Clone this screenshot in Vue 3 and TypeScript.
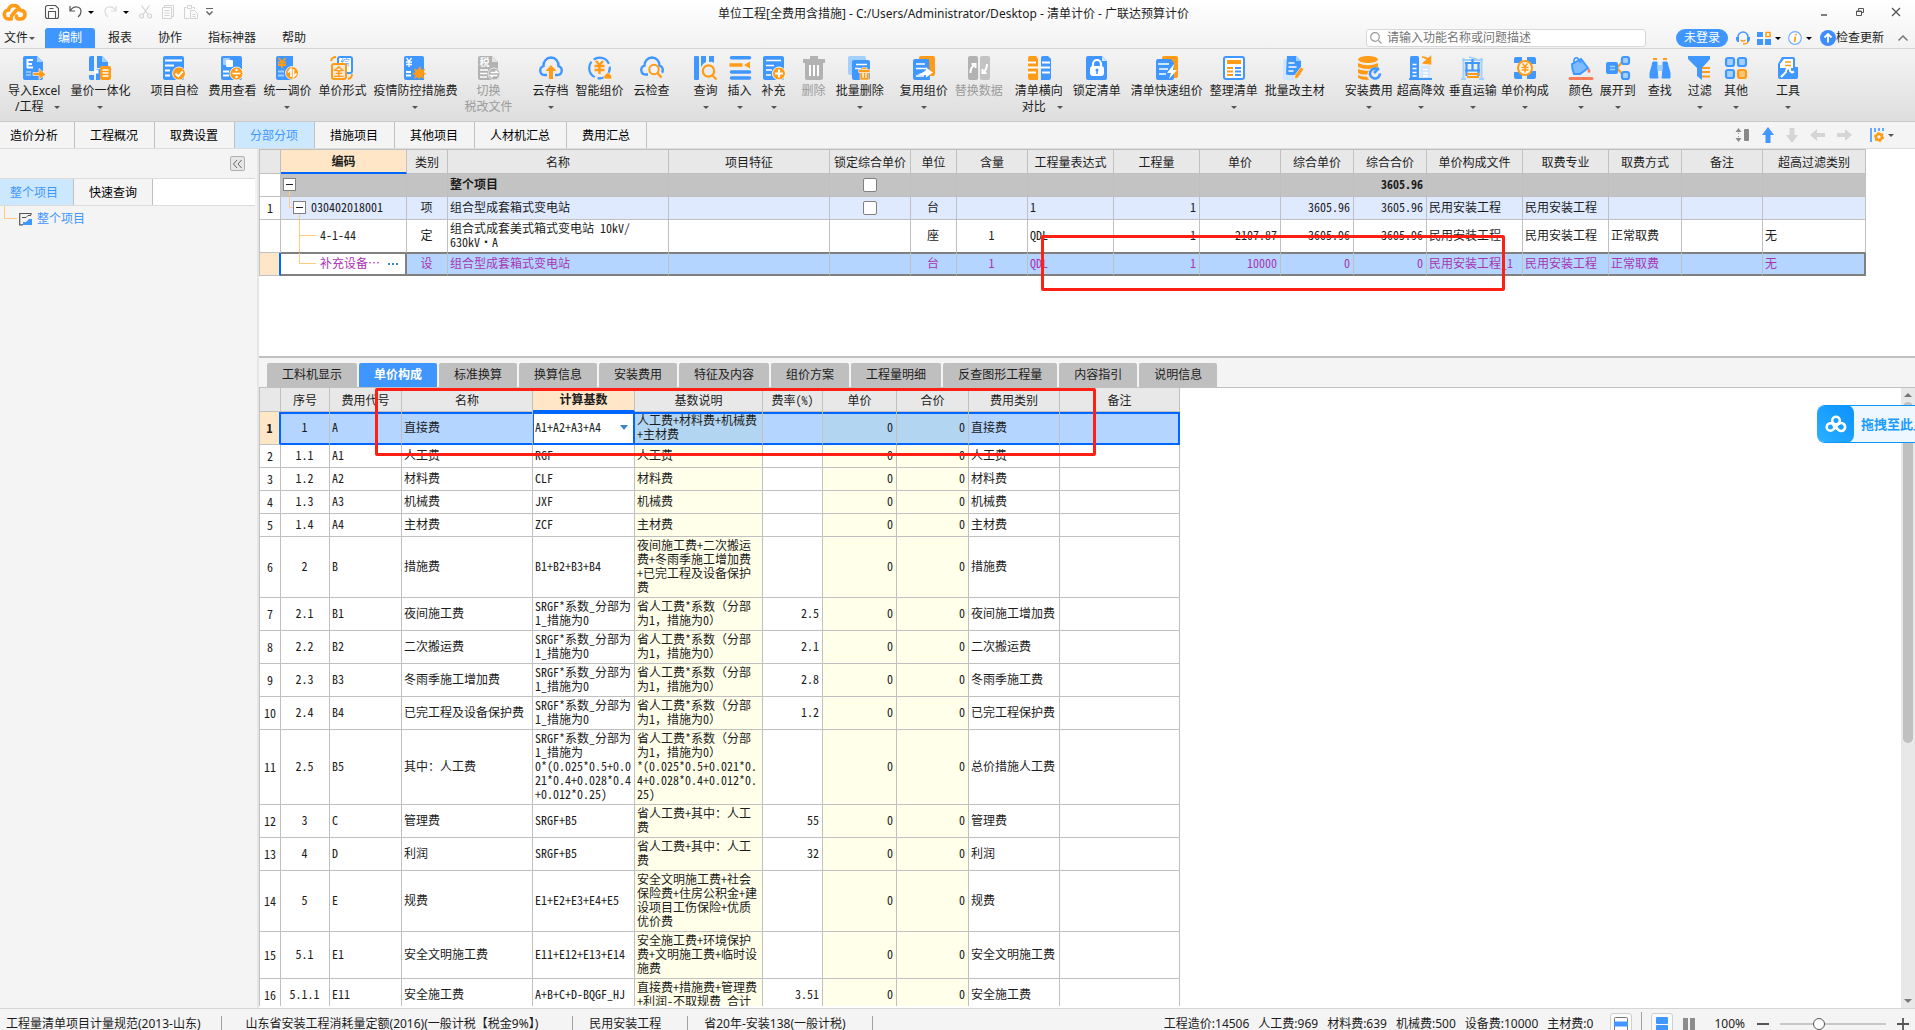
<script setup lang="ts">
import { ref } from 'vue'

const B = '#3f97ff'
const O = '#ff9b16'
const L = '#a3d0ff'
const G = '#b2b2b2'

const doc = (fill: string) => `<path d="M3 0h12l6 6v16a2 2 0 0 1-2 2H3a2 2 0 0 1-2-2V2a2 2 0 0 1 2-2z" fill="${fill}"/>`
const fold = `<path d="M15 0l6 6h-6z" fill="${L}"/>`

const icons: Record<string, string> = {
  excel: `${doc(B)}${fold}<path d="M5 4h6M5 8h5M5 11.500h6M5.500 3v9" stroke="#fff" stroke-width="2" fill="none"/><path d="M4 16h5M4 19h5" stroke="${L}" stroke-width="1.500"/><path d="M11 16.500h6v-4l7 6-7 5v-4h-6z" fill="${O}" stroke="#fff" stroke-width=".6"/>`,
  integrate: `<path d="M1 2a2 2 0 0 1 2-2h3v15H1zM9 0h5l6 6v6H9z" fill="${B}"/><path d="M14 0l6 6h-6z" fill="${L}"/><path d="M1 19h5v5H3a2 2 0 0 1-2-2zM8 13h4v11H8zM1 13h5v2H1z" fill="${B}"/><path d="M6 13.500h4.500v4H6z" fill="#fff"/><rect x="12" y="10" width="11" height="14" rx="2" fill="${O}"/><path d="M14.500 14h6M14.500 17h6M14.500 20h6" stroke="#fff" stroke-width="1.500"/>`,
  check: `<rect x="1" y="0" width="21" height="24" rx="2" fill="${B}"/><path d="M3 4.500h17M3 9.500h9M3 14.500h5M3 19.500h5" stroke="#fff" stroke-width="2"/><circle cx="17" cy="17.500" r="6.500" fill="${O}" stroke="#fff" stroke-width=".8"/><path d="M13.500 17.500l2.800 2.800 4.500-5" stroke="#fff" stroke-width="2" fill="none"/>`,
  fee: `<rect x="1" y="0" width="21" height="24" rx="2" fill="${B}"/><rect x="3" y="2" width="7" height="7" rx="1" fill="${L}"/><rect x="6" y="4" width="7" height="7" rx="1" fill="#fff"/><path d="M3 15.500h6M3 19.500h6" stroke="#fff" stroke-width="2"/><circle cx="16.500" cy="17.500" r="6.500" fill="${O}" stroke="#fff" stroke-width=".8"/><path d="M12.500 17.500h8" stroke="#fff" stroke-width="1.600"/><circle cx="16.500" cy="14" r="1.200" fill="#fff"/><circle cx="16.500" cy="21" r="1.200" fill="#fff"/>`,
  adjust: `<path d="M3 0h15v24H3a2 2 0 0 1-2-2V2a2 2 0 0 1 2-2z" fill="${B}"/><path d="M3.500 2l3.500 4 3.500-4M3 6.500h8M3 9h8M7 6v6" stroke="${O}" stroke-width="1.800" fill="none"/><path d="M3 15.500h6M3 19.500h6" stroke="${L}" stroke-width="2"/><circle cx="17" cy="17" r="6.500" fill="${O}" stroke="#fff" stroke-width=".8"/><path d="M16 21v-8l-3 3.500M18.500 13v8l3-3.500" stroke="#fff" stroke-width="1.700" fill="none"/>`,
  form: `<rect x="8" y="1" width="14" height="16" rx="2" fill="#fff" stroke="${B}" stroke-width="2"/><text x="15" y="10" font-size="9" text-anchor="middle" fill="${B}" font-family="Noto Sans CJK SC, sans-serif">综</text><rect x="2" y="8" width="14" height="15" rx="2" fill="#f4ead9" stroke="${O}" stroke-width="2"/><text x="9" y="20" font-size="11" font-weight="700" text-anchor="middle" fill="${O}" font-family="Noto Sans CJK SC, sans-serif">全</text><path d="M1 5q1-4 5-4M22 18q0 4-4 5" stroke="${O}" stroke-width="2" fill="none"/>`,
  epidemic: `<path d="M3 0h16a2 2 0 0 1 2 2v22H3a2 2 0 0 1-2-2V2a2 2 0 0 1 2-2z" fill="${B}"/><path d="M3.500 2l2.500 3.500 2.500-3.500M3 6h6M3 8.500h6M6 5v6" stroke="#fff" stroke-width="1.300" fill="none"/><path d="M3 16h5M3 19.500h5" stroke="#fff" stroke-width="2"/><path d="M17 10l1.500 4 4-1.500-2 3.500 3 2-3.500 1 1.500 4-4-2-1.500 3-1-3-4 2 1.500-4-3.500-1 3.500-2-2-3.500 4 1.500z" fill="${O}"/>`,
  tax: `${doc(G)}<path d="M15 0l6 6h-6z" fill="#e4e4e4"/><text x="7.500" y="10" font-size="10" font-weight="700" text-anchor="middle" fill="#fff" font-family="Noto Sans CJK SC, sans-serif">税</text><path d="M3 14h8M3 17.500h7M3 21h7" stroke="#fff" stroke-width="1.500"/><circle cx="17" cy="18" r="6" fill="${G}" stroke="#eee" stroke-width="1"/><path d="M13.500 16.500h7l-2-2M20.500 19.500h-7l2 2" stroke="#fff" stroke-width="1.500" fill="none"/>`,
  cloudup: `<path d="M8 19H5.500a4.500 4.500 0 0 1-1-8.800A7.800 7.800 0 0 1 12 1.500a7.800 7.800 0 0 1 7.500 8.700 4.500 4.500 0 0 1-1 8.800H16" fill="none" stroke="${B}" stroke-width="2.400"/><path d="M12 9l5.500 6H14v8h-4v-8H6.500z" fill="${O}"/>`,
  smart: `<circle cx="11.500" cy="12" r="10.300" fill="none" stroke="${B}" stroke-width="2.200" stroke-dasharray="18 3"/><path d="M8 5l3.500 4L15 5M6.500 10h10M6.500 14h10M11.500 9v9" stroke="${O}" stroke-width="2.400" fill="none"/><path d="M16 23q-1-3 1-4 2-4 5-1 2 1 2 5z" fill="${O}" stroke="#fff" stroke-width=".6"/>`,
  cloudfind: `<path d="M8 18.500H5.500a4.500 4.500 0 0 1-1-8.800A7.800 7.800 0 0 1 12 1.500a7.800 7.800 0 0 1 7.500 8.200 4.500 4.500 0 0 1 2.500 7" fill="none" stroke="${B}" stroke-width="2.400"/><circle cx="14" cy="13.500" r="4.700" fill="#f4f4f4" stroke="${O}" stroke-width="2"/><path d="M17.500 17l4 4.500" stroke="${O}" stroke-width="2.400"/>`,
  query: `<rect x="0" y="0" width="5" height="24" rx="1" fill="${B}"/><path d="M7 0h5v6q-3 1-5 5zM15 0h5v7q-2-2-5-1z" fill="${B}"/><circle cx="14.500" cy="15" r="5.700" fill="none" stroke="${O}" stroke-width="2.200"/><path d="M18.500 19.500l4 4" stroke="${O}" stroke-width="2.200"/>`,
  insert: `<path d="M3.500 1.800h18M3.500 16h18M3.500 22h18" stroke="${B}" stroke-width="3.500" stroke-linecap="round"/><path d="M1.500 9h13" stroke="${O}" stroke-width="3.500"/><path d="M16 9l6-3.500v7z" fill="${O}"/>`,
  add: `<rect x="1" y="0" width="21" height="24" rx="2" fill="${B}"/><path d="M4 4.500h15M4 9.500h8M4 14h6M4 19h5" stroke="#fff" stroke-width="1.600"/><circle cx="17" cy="17.500" r="6.500" fill="${O}" stroke="#fff" stroke-width="1"/><path d="M17 13.500v8M13 17.500h8" stroke="#fff" stroke-width="2.200"/>`,
  del: `<path d="M1 3h7V0h8v3h7v4H1zM3 7h18v15a2 2 0 0 1-2 2H5a2 2 0 0 1-2-2z" fill="${G}"/><path d="M8 9v11M12 9v11M16 9v11" stroke="#fff" stroke-width="2"/>`,
  batchdel: `<rect x="0" y="0" width="18" height="19" rx="2" fill="${L}"/><rect x="4" y="4" width="18" height="20" rx="2" fill="${B}"/><path d="M8 8.500h11M7 12.500h6" stroke="#fff" stroke-width="1.600"/><path d="M10.500 13.500h11.500v3H10.500zM12 16.500h9V24h-9zM14 11.500h5v2h-5z" fill="${O}" stroke="#fff" stroke-width=".5"/><path d="M15 17v5M18 17v5" stroke="#fff" stroke-width="1.300"/>`,
  reuse: `<rect x="7" y="0" width="16" height="20" rx="2" fill="${O}"/><path d="M3 3h14l1 21H3a2 2 0 0 1-2-2V5a2 2 0 0 1 2-2z" fill="${B}"/><path d="M4 8h9M4 12.500h11M4 20h8" stroke="#fff" stroke-width="1.600"/><path d="M5 18q5 0 9-4v-2.500l7 5-7 5V19q-4 1-9-1z" fill="#fff"/>`,
  replace: `<rect x="1" y="0" width="10" height="24" rx="2" fill="${G}"/><rect x="13" y="0" width="10" height="24" rx="2" fill="#c3c3c3"/><path d="M3.500 17q0-6 4-8M4.500 8h4v4M20 8q0 5-3 8M15.500 13v4h4" stroke="#fff" stroke-width="2" fill="none"/>`,
  compare: `<path d="M3 0h6l2 3v21H3a2 2 0 0 1-2-2V2a2 2 0 0 1 2-2z" fill="${O}"/><path d="M14 2a2 2 0 0 1 2-2h5l3 3v19a2 2 0 0 1-2 2h-8z" fill="${B}"/><path d="M1 6.500h8M1 11.500h10M1 16.500h8M15 6.500h8M14 11.500h9M15 16.500h8" stroke="#fff" stroke-width="1.800"/>`,
  lock: `<path d="M3 0h14l5 5v17a2 2 0 0 1-2 2H3a2 2 0 0 1-2-2V2a2 2 0 0 1 2-2z" fill="${B}"/><path d="M17 0l5 5h-5z" fill="#cfe6ff"/><rect x="5" y="10" width="14" height="10" rx="3" fill="#fff"/><path d="M8 11V8a4 4 0 0 1 8 0v3" fill="none" stroke="#fff" stroke-width="2.200"/><circle cx="12" cy="14" r="1.500" fill="${B}"/><path d="M12 14v4" stroke="${B}" stroke-width="1.500"/>`,
  fast: `<rect x="7" y="0" width="16" height="22" rx="2" fill="${O}"/><path d="M3 3h13l3 4v15a2 2 0 0 1-2 2H3a2 2 0 0 1-2-2V5a2 2 0 0 1 2-2z" fill="${B}"/><path d="M3 8h11M4 13h9M4 18h7" stroke="#fff" stroke-width="1.700"/><path d="M19 8l-7 9h4l-2 6 8-9h-4z" fill="#fff"/>`,
  arrange: `<rect x="2" y="1" width="20" height="22" rx="2" fill="#fff" stroke="${B}" stroke-width="2"/><path d="M5 6h14" stroke="${O}" stroke-width="4"/><path d="M5 12h6M5 15.500h6M5 19h6" stroke="${O}" stroke-width="1.800"/><path d="M13 12h6M13 15.500h6M13 19h6" stroke="${B}" stroke-width="1.800"/>`,
  material: `<rect x="0" y="3" width="15" height="21" rx="2" fill="#cfe7ff"/><path d="M4 0h9l5 5v14H5a2 2 0 0 1-2-2z" fill="${B}"/><path d="M13 0l5 5h-5z" fill="${L}"/><path d="M5.500 7h6M5.500 11h8M5.500 15h5" stroke="#fff" stroke-width="1.600"/><path d="M18 11l3 2-6 9-3.500 1 .5-4z" fill="${O}" stroke="#fff" stroke-width=".6"/>`,
  install: `<ellipse cx="11" cy="3.500" rx="10" ry="3.500" fill="${O}"/><path d="M1 7q10 4.500 20 0v4q-10 4-20 0zM1 13q6 2.500 11 1.500l-2 4q-6 0-9-1.500zM1 19q4 2 9 1.700l2 3.300Q3 24 1 21.500z" fill="${O}"/><path d="M21 13.500a5 5 0 1 0 2 4M17 17l5-5" stroke="${B}" stroke-width="2.600" fill="none"/>`,
  high: `<rect x="1" y="0" width="9" height="23" rx="1.500" fill="${B}"/><path d="M3.500 8.500h4M3.500 12.500h4M3.500 16.500h4M3.500 20h4" stroke="#fff" stroke-width="1.500"/><rect x="12" y="10" width="9" height="13" fill="#d0e7ff"/><path d="M14 13.500h5M14 17h5M14 20h5" stroke="#fff" stroke-width="1.500"/><path d="M0 23h23" stroke="${B}" stroke-width="2"/><path d="M13 1q5 0 7 4M21.500 1v7l-7-1z" stroke="${O}" stroke-width="1.500" fill="${O}"/>`,
  vertical: `<path d="M2.500 2v21M20.500 2v21M0 23h5M18 23h5M1 4h21" stroke="${L}" stroke-width="2" fill="none"/><path d="M8 1l8 2" stroke="${L}" stroke-width="1.500"/><path d="M5.500 7v13M17.500 7v13M11.500 3v12M4 7h15M4 14.500h15" stroke="${B}" stroke-width="2.200" fill="none"/><path d="M6 18h12M6 21h12" stroke="${O}" stroke-width="2"/>`,
  compose: `<path d="M3 1h6v6H1V3a2 2 0 0 1 2-2zM14 1h7a2 2 0 0 1 2 2v5h-9zM1 16h8v7H3a2 2 0 0 1-2-2zM14 15h9v6a2 2 0 0 1-2 2h-7z" fill="${B}"/><circle cx="12" cy="12" r="7" fill="#fff8ec" stroke="${O}" stroke-width="2"/><path d="M9.500 7.500l2.500 3 2.500-3M8.500 11.500h7M8.500 14h7M12 11v5.500" stroke="${O}" stroke-width="1.500" fill="none"/>`,
  color: `<path d="M3 8l9-5 7 9-8 6H5q-2-5-2-10z" fill="#7dbbff" stroke="${B}" stroke-width="2"/><path d="M5 8V4q1-3 3.500-2L12 7" stroke="${B}" stroke-width="1.600" fill="none"/><path d="M20 12q3 4 0 5-3-1 0-5z" fill="#fa7d5a"/><path d="M1 22.500h22" stroke="#fa7d5a" stroke-width="3" stroke-linecap="round"/>`,
  expand: `<path d="M11 12l6-7M11 12l6 7" stroke="${O}" stroke-width="2"/><rect x="0" y="6" width="12" height="12" rx="2" fill="${B}"/><path d="M4 10.500h5M4 13.500h5" stroke="${L}" stroke-width="1.600"/><rect x="16" y="1" width="7" height="7" rx="2" fill="${L}" stroke="${B}" stroke-width="2.200"/><rect x="16" y="16" width="7" height="7" rx="2" fill="${L}" stroke="${B}" stroke-width="2.200"/>`,
  find: `<path d="M5 6h4v7l1 9H2V17zM19 6h-4v7l-1 9h8v-5z" fill="${B}" stroke="${B}" stroke-width="1"/><path d="M10 9h4v6h-4z" fill="${L}"/><path d="M5 3h4M15 3h4" stroke="${O}" stroke-width="2.200"/>`,
  filter: `<path d="M0 0h22v3l-8 9v12l-5-4v-8L0 3z" fill="${B}"/><path d="M14 12h8M14 16h8M14 20.500h8" stroke="${O}" stroke-width="2.200"/>`,
  other: `<g fill="${L}" stroke="${B}" stroke-width="2.200"><rect x="2" y="2" width="8" height="8" rx="2"/><rect x="14" y="2" width="8" height="8" rx="2"/><rect x="2" y="14" width="8" height="8" rx="2"/></g><rect x="14" y="14" width="8" height="8" rx="2" fill="#ffc473" stroke="${O}" stroke-width="2.200"/>`,
  tool: `<path d="M6 1h11a2 2 0 0 1 2 2v8h3v10a2 2 0 0 1-2 2H4a2 2 0 0 1-2-2V8z" fill="${B}"/><path d="M8 3h9v9H4V8z" fill="#fff"/><path d="M9 6h6M9 9.500h6" stroke="${O}" stroke-width="1.700"/><path d="M5 21l5-5a3.500 3.500 0 0 1 4-4v3l2 1.500 2-1" stroke="#fff" stroke-width="2" fill="none"/>`,
}

interface Tool {
  icon: string
  text: string
  gap: number
  second?: string
  arrow?: boolean
  off?: boolean
}
const tools: Tool[] = [
  { icon: 'excel', text: '导入Excel', second: '/工程', arrow: true, gap: 0 },
  { icon: 'integrate', text: '量价一体化', arrow: true, gap: 10 },
  { icon: 'check', text: '项目自检', gap: 20 },
  { icon: 'fee', text: '费用查看', gap: 10 },
  { icon: 'adjust', text: '统一调价', arrow: true, gap: 7 },
  { icon: 'form', text: '单价形式', gap: 7 },
  { icon: 'epidemic', text: '疫情防控措施费', arrow: true, gap: 7 },
  { icon: 'tax', text: '切换', second: '税改文件', off: true, gap: 7 },
  { icon: 'cloudup', text: '云存档', arrow: true, gap: 20 },
  { icon: 'smart', text: '智能组价', gap: 7 },
  { icon: 'cloudfind', text: '云检查', gap: 10 },
  { icon: 'query', text: '查询', arrow: true, gap: 24 },
  { icon: 'insert', text: '插入', arrow: true, gap: 10 },
  { icon: 'add', text: '补充', arrow: true, gap: 10 },
  { icon: 'del', text: '删除', off: true, gap: 16 },
  { icon: 'batchdel', text: '批量删除', arrow: true, gap: 10 },
  { icon: 'reuse', text: '复用组价', arrow: true, gap: 16 },
  { icon: 'replace', text: '替换数据', off: true, gap: 7 },
  { icon: 'compare', text: '清单横向', second: '对比', arrow: true, gap: 12 },
  { icon: 'lock', text: '锁定清单', gap: 10 },
  { icon: 'fast', text: '清单快速组价', gap: 10 },
  { icon: 'arrange', text: '整理清单', arrow: true, gap: 7 },
  { icon: 'material', text: '批量改主材', gap: 7 },
  { icon: 'install', text: '安装费用', arrow: true, gap: 20 },
  { icon: 'high', text: '超高降效', arrow: true, gap: 4 },
  { icon: 'vertical', text: '垂直运输', arrow: true, gap: 4 },
  { icon: 'compose', text: '单价构成', arrow: true, gap: 4 },
  { icon: 'color', text: '颜色', arrow: true, gap: 20 },
  { icon: 'expand', text: '展开到', arrow: true, gap: 7 },
  { icon: 'find', text: '查找', gap: 12 },
  { icon: 'filter', text: '过滤', arrow: true, gap: 16 },
  { icon: 'other', text: '其他', arrow: true, gap: 12 },
  { icon: 'tool', text: '工具', arrow: true, gap: 28 },
]

const menus = ['编制', '报表', '协作', '指标神器', '帮助']
const pages = ['造价分析', '工程概况', '取费设置', '分部分项', '措施项目', '其他项目', '人材机汇总', '费用汇总']

const listCols: [string, number][] = [
  ['', 21], ['编码', 126], ['类别', 41], ['名称', 221], ['项目特征', 161], ['锁定综合单价', 81], ['单位', 46],
  ['含量', 71], ['工程量表达式', 86], ['工程量', 86], ['单价', 81], ['综合单价', 73], ['综合合价', 73],
  ['单价构成文件', 96], ['取费专业', 86], ['取费方式', 73], ['备注', 81], ['超高过滤类别', 103],
]
const listAlign = ['c', '', 'c', 'l', 'l', 'c', 'c', 'c', 'l', 'r', 'r', 'r', 'r', 'l', 'l', 'l', 'l', 'l']
const listRows = [
  { kind: 'root', code: '', cells: ['', '整个项目', '', '#', '', '', '', '', '', '', '3605.96', '', '', '', '', ''] },
  { kind: 'item', code: '030402018001', cells: ['项', '组合型成套箱式变电站', '', '#', '台', '', '1', '1', '', '3605.96', '3605.96', '民用安装工程', '民用安装工程', '', '', ''] },
  { kind: 'quota', code: '4-1-44', cells: ['定', '组合式成套美式箱式变电站 10kV/\n630kV·A', '', '', '座', '1', 'QDL', '1', '2107.87', '3605.96', '3605.96', '民用安装工程', '民用安装工程', '正常取费', '', '无'] },
  { kind: 'picked', code: '补充设备⋯', cells: ['设', '组合型成套箱式变电站', '', '', '台', '1', 'QDL', '1', '10000', '0', '0', '民用安装工程_1', '民用安装工程', '正常取费', '', '无'] },
]

const details = ['工料机显示', '单价构成', '标准换算', '换算信息', '安装费用', '特征及内容', '组价方案', '工程量明细', '反查图形工程量', '内容指引', '说明信息']
const feeCols: [string, number][] = [
  ['', 21], ['序号', 49], ['费用代号', 72], ['名称', 131], ['计算基数', 102], ['基数说明', 128],
  ['费率(%)', 60], ['单价', 74], ['合价', 72], ['费用类别', 91], ['备注', 120],
]
const factor = 'SRGF*系数_分部为\n1_措施为0'
const factorNote = '省人工费*系数（分部\n为1，措施为0）'
const feeRows: string[][] = [
  ['1', 'A', '直接费', 'A1+A2+A3+A4', '人工费+材料费+机械费\n+主材费', '', '直接费'],
  ['1.1', 'A1', '人工费', 'RGF', '人工费', '', '人工费'],
  ['1.2', 'A2', '材料费', 'CLF', '材料费', '', '材料费'],
  ['1.3', 'A3', '机械费', 'JXF', '机械费', '', '机械费'],
  ['1.4', 'A4', '主材费', 'ZCF', '主材费', '', '主材费'],
  ['2', 'B', '措施费', 'B1+B2+B3+B4', '夜间施工费+二次搬运\n费+冬雨季施工增加费\n+已完工程及设备保护\n费', '', '措施费'],
  ['2.1', 'B1', '夜间施工费', factor, factorNote, '2.5', '夜间施工增加费'],
  ['2.2', 'B2', '二次搬运费', factor, factorNote, '2.1', '二次搬运费'],
  ['2.3', 'B3', '冬雨季施工增加费', factor, factorNote, '2.8', '冬雨季施工费'],
  ['2.4', 'B4', '已完工程及设备保护费', factor, factorNote, '1.2', '已完工程保护费'],
  ['2.5', 'B5', '其中：人工费', 'SRGF*系数_分部为\n1_措施为\n0*(0.025*0.5+0.0\n21*0.4+0.028*0.4\n+0.012*0.25)', '省人工费*系数（分部\n为1，措施为0）\n*(0.025*0.5+0.021*0.\n4+0.028*0.4+0.012*0.\n25)', '', '总价措施人工费'],
  ['3', 'C', '管理费', 'SRGF+B5', '省人工费+其中：人工\n费', '55', '管理费'],
  ['4', 'D', '利润', 'SRGF+B5', '省人工费+其中：人工\n费', '32', '利润'],
  ['5', 'E', '规费', 'E1+E2+E3+E4+E5', '安全文明施工费+社会\n保险费+住房公积金+建\n设项目工伤保险+优质\n优价费', '', '规费'],
  ['5.1', 'E1', '安全文明施工费', 'E11+E12+E13+E14', '安全施工费+环境保护\n费+文明施工费+临时设\n施费', '', '安全文明施工费'],
  ['5.1.1', 'E11', '安全施工费', 'A+B+C+D-BQGF_HJ', '直接费+措施费+管理费\n+利润-不取规费_合计', '3.51', '安全施工费'],
]
// Chinese punctuation keeps its full width, while Latin text is set half-width
const pieces = (s: string) => s.split(/([（），：])/).filter((p) => p !== '')
const isMark = (p: string) => /^[（），：]$/.test(p)

const totals = ['工程造价:14506', '人工费:969', '材料费:639', '机械费:500', '设备费:10000', '主材费:0']
const basis = ref('A1+A2+A3+A4')
const zoom = ref(35)
</script>

<template>
  <div class="app">
    <header class="top">
      <div class="title-row">
        <div class="quick">
          <svg class="logo" width="24" height="18" viewBox="0 0 24 18"><path d="M9 15.500H6.500a4.500 4.500 0 0 1-.5-9Q7 2 11.500 2q4 0 5.500 4M9 12.500l4.500-5.500q2.500-2 5 0 4 0 4 4t-4 4.500h-2.500q-2.500-.5-2-3" transform="translate(-.5 .5)" fill="none" stroke="#ff9b16" stroke-width="3.600" stroke-linecap="round" /></svg>
          <button aria-label="保存" class="save"><svg width="14" height="14" viewBox="0 0 14 14" fill="none" stroke="#555" stroke-width="1.100"><path d="M.5 2.500a2 2 0 0 1 2-2h8l3 3v8a2 2 0 0 1-2 2h-9a2 2 0 0 1-2-2zM3.500 13.500v-7h7v7M4.500 3.500h4" /></svg></button>
          <button aria-label="撤销" class="undo"><svg width="13" height="14" viewBox="0 0 13 14" fill="none" stroke="#555" stroke-width="1.200"><path d="M1 1v5h5M1.500 5.500Q4 1.500 8 2q4 .5 4 4.500 0 3-3 5.500" /></svg></button>
          <i class="tri dark"></i>
          <button aria-label="恢复" class="redo"><svg width="13" height="14" viewBox="0 0 13 14" fill="none" stroke="#dadada" stroke-width="1.200"><path d="M12 1v5H7M11.500 5.500Q9 1.500 5 2 1 2.500 1 6.500q0 3 3 5.500" /></svg></button>
          <i class="tri dark"></i>
          <button aria-label="剪切" class="cut"><svg width="13" height="14" viewBox="0 0 13 14" fill="none" stroke="#d2d2d2" stroke-width="1.200"><path d="M2.500.5l6.500 9M10.500.5L4 9.500" /><circle cx="2.500" cy="11" r="2" /><circle cx="10.500" cy="11" r="2" /></svg></button>
          <button aria-label="复制" class="copy"><svg width="12" height="14" viewBox="0 0 12 14" fill="none" stroke="#d2d2d2"><path d="M2.500 2.500v-2h9v11h-2M.5 2.500h9v11h-9zM2.500 5.500h5M2.500 8h5M2.500 10.500h5" /></svg></button>
          <button aria-label="粘贴" class="paste"><svg width="14" height="14" viewBox="0 0 14 14" fill="none" stroke="#d2d2d2"><path d="M5.500 13.500h-5v-11h2M10.500 4V2.500h-2M3.500 .5h4v3h-4zM6.500 5.500h4l3 3v5h-7zM8.500 9.500h3M8.500 11.500h3" /></svg></button>
          <svg class="more" width="7" height="8" viewBox="0 0 7 8"><path d="M0 .5h7" stroke="#666" /><path d="M.5 3.500l3 3 3-3" fill="none" stroke="#666" stroke-width="1.500" /></svg>
        </div>
        <div class="title">单位工程[全费用含措施] - C:/Users/Administrator/Desktop - 清单计价 - 广联达预算计价</div>
        <div class="win">
          <button aria-label="最小化"><svg width="8" height="8" viewBox="0 0 8 8"><path d="M1 7h6" stroke="#555" stroke-width="1.500" /></svg></button>
          <button aria-label="还原"><svg width="8" height="8" viewBox="0 0 8 8" fill="none" stroke="#555"><path d="M2.500 2.500v-2h5v4h-2M.5 3h5v4.500h-5zM.5 3.500h5" /></svg></button>
          <button aria-label="关闭"><svg width="8" height="8" viewBox="0 0 8 8"><path d="M0 0l8 8M8 0L0 8" stroke="#555" stroke-width="1.300" /></svg></button>
        </div>
      </div>
      <nav class="menu-row">
        <button class="file">文件<i class="tri small"></i></button>
        <button v-for="m in menus" :key="m" class="menu" :class="{ on: m === '编制' }">{{ m }}</button>
        <label class="search">
          <svg width="12" height="12" viewBox="0 0 12 12" fill="none" stroke="#999" stroke-width="1.200"><circle cx="5" cy="5" r="4.300" /><path d="M8.500 8.500l3 3" /></svg>
          <input type="text" placeholder="请输入功能名称或问题描述" aria-label="搜索" />
        </label>
        <button class="login">未登录</button>
        <button class="mini" aria-label="客服"><svg width="14" height="14" viewBox="0 0 14 14"><path d="M2 9V6a5 5 0 0 1 10 0v3" fill="none" stroke="#3f97ff" stroke-width="1.500" /><path d="M0 6h3v5H1.500Q0 10 0 8zM14 6h-3v5h1.500Q14 10 14 8z" fill="#3f97ff" /><path d="M4.500 9q2.500 2 5 0M12 11q-1 2-5 2" stroke="#ff9b16" stroke-width="1.500" fill="none" /></svg></button>
        <button class="mini grid" aria-label="应用"><svg width="14" height="14" viewBox="0 0 14 14"><path d="M0 1h6v5H0zM0 8h6v6H0zM8 8h6v6H8z" fill="#3f97ff" /><path d="M9 1.500h4v4H9z" fill="#fff" stroke="#ff9b16" stroke-width="1.500" /></svg></button>
        <i class="tri dark"></i>
        <button class="mini info" aria-label="信息"><svg width="14" height="14" viewBox="0 0 14 14"><circle cx="7" cy="7" r="6.300" fill="#fff" stroke="#6fb1ff" stroke-width="1.200" /><path d="M7.500 5.500L6.500 11M8 2.800v1.500" stroke="#ff9b16" stroke-width="1.700" /></svg></button>
        <i class="tri dark"></i>
        <button class="update"><svg width="16" height="16" viewBox="0 0 16 16"><circle cx="8" cy="8" r="8" fill="#3f8cff" /><path d="M8 12.500v-8M4.500 7.500L8 4l3.500 3.500" stroke="#fff" stroke-width="1.800" fill="none" /></svg>检查更新</button>
        <button class="chev" aria-label="折叠"><svg width="10" height="6" viewBox="0 0 10 6"><path d="M.5 5.500L5 1l4.500 4.500" fill="none" stroke="#777" stroke-width="1.500" /></svg></button>
      </nav>
    </header>

    <div class="tools">
      <button v-for="t in tools" :key="t.text" class="tool" :class="['g' + t.gap, { off: t.off }]">
        <svg width="24" height="24" viewBox="0 0 24 24" v-html="icons[t.icon]"></svg>
        <span class="label">{{ t.text }}</span>
        <span v-if="t.second" class="second" :class="{ end: t.arrow }">{{ t.second }}<i v-if="t.arrow" class="tri small"></i></span>
        <i v-else-if="t.arrow" class="tri small below"></i>
      </button>
    </div>

    <nav class="pages">
      <button v-for="p in pages" :key="p" class="page" :class="{ on: p === '分部分项' }">{{ p }}</button>
      <div class="nav-icons">
        <svg width="14" height="14" viewBox="0 0 14 14"><path d="M2.500 0L5.500 4h-6zM2.500 14l3-4h-6z" fill="#888" /><path d="M2.500 5v1M2.500 8v1" stroke="#888" /><rect x="8" y="1" width="5" height="12" rx="1" fill="#888" /></svg>
        <svg width="12" height="16" viewBox="0 0 12 16"><path d="M6 0l6 8H8.500v8h-5V8H0z" fill="#3f97ff" /></svg>
        <svg width="12" height="16" viewBox="0 0 12 16"><path d="M6 16l6-8H8.500V1h-5v7H0z" fill="#d5d5d5" /></svg>
        <svg width="15" height="12" viewBox="0 0 15 12"><path d="M0 6l7-6v4h8v4H7v4z" fill="#d5d5d5" /></svg>
        <svg width="15" height="12" viewBox="0 0 15 12"><path d="M15 6L8 0v4H0v4h8v4z" fill="#d5d5d5" /></svg>
        <svg class="gear" width="14" height="14" viewBox="0 0 14 14"><path d="M1 0v14M5 0v4M9 0v3M13 0v3" stroke="#3f97ff" stroke-width="1.600" /><circle cx="9" cy="9" r="3" fill="none" stroke="#ff9b16" stroke-width="2.600" /><circle cx="9" cy="9" r="4.300" fill="none" stroke="#ff9b16" stroke-width="1.500" stroke-dasharray="2 2.500" /></svg>
        <i class="tri small"></i>
      </div>
    </nav>

    <div class="body">
      <aside class="side">
        <div class="side-head"><button class="collapse" aria-label="收起"><svg width="9" height="8" viewBox="0 0 9 8"><path d="M4 0L.5 4 4 8M8.500 0L5 4l3.500 4" fill="none" stroke="#666" /></svg></button></div>
        <div class="side-tabs">
          <button class="on">整个项目</button>
          <button>快速查询</button>
        </div>
        <div class="tree">
          <svg width="37" height="26" viewBox="0 0 37 26"><path d="M4.500 0v12.500H17" fill="none" stroke="#ffc980" /><path d="M31 9V7.500H19.700v11.300H23" fill="none" stroke="#555" stroke-width="1.200" /><path d="M22 11.500h4l2-2h3" fill="none" stroke="#555" /><path d="M23 19v-3h3l3-3h3v6z" fill="#3f97ff" /></svg>
          <a href="#">整个项目</a>
        </div>
      </aside>

      <main class="main">
        <section class="upper">
          <table class="grid-table list">
            <colgroup><col v-for="(c, i) in listCols" :key="i" :style="{ width: c[1] + 'px' }" /></colgroup>
            <thead>
              <tr><th v-for="(c, i) in listCols" :key="i" :class="{ hot: i === 1 }">{{ c[0] }}</th></tr>
            </thead>
            <tbody>
              <tr v-for="r in listRows" :key="r.kind" :class="r.kind">
                <td class="no">{{ r.kind === 'item' ? '1' : '' }}</td>
                <td class="code">
                  <div class="node">
                    <button v-if="r.kind === 'root'" aria-label="折叠"><svg width="28" height="22" viewBox="0 0 28 22"><path d="M8.500 17v5" stroke="#ffc980" /><rect x="2.500" y="4.500" width="12" height="12" fill="#fff" stroke="#808080" /><path d="M5 10.500h7" stroke="#222" /></svg></button>
                    <button v-else-if="r.kind === 'item'" aria-label="折叠"><svg width="28" height="22" viewBox="0 0 28 22"><path d="M8.500 0v10.500H12M18.500 17v5" fill="none" stroke="#ffc980" /><rect x="12.500" y="4.500" width="12" height="12" fill="#fff" stroke="#808080" /><path d="M15 10.500h7" stroke="#222" /></svg></button>
                    <svg v-else-if="r.kind === 'quota'" width="37" height="32" viewBox="0 0 37 32"><path d="M18.500 0v32M18.500 15.500H35" fill="none" stroke="#ffc980" /></svg>
                    <svg v-else width="37" height="21" viewBox="0 0 37 21"><path d="M18.500 0v10.500H35" fill="none" stroke="#ffc980" /></svg>
                    <span>{{ r.code }}</span>
                    <button v-if="r.kind === 'picked'" class="dots" aria-label="更多"><svg width="11" height="2" viewBox="0 0 11 2"><path d="M0 0h2v2H0zM4 0h2v2H4zM8 0h2v2H8z" fill="#3a86c8" /></svg></button>
                  </div>
                </td>
                <td v-for="(v, i) in r.cells" :key="i" :class="listAlign[i + 2]">
                  <input v-if="v === '#'" type="checkbox" class="box" aria-label="锁定综合单价" /><template v-else>{{ v }}</template>
                </td>
              </tr>
            </tbody>
          </table>
          <div class="mark mark-a"></div>
        </section>

        <nav class="details">
          <button v-for="d in details" :key="d" :class="{ on: d === '单价构成' }">{{ d }}</button>
        </nav>

        <section class="lower">
          <div class="clip">
            <table class="grid-table fees">
              <colgroup><col v-for="(c, i) in feeCols" :key="i" :style="{ width: c[1] + 'px' }" /></colgroup>
              <thead>
                <tr><th v-for="(c, i) in feeCols" :key="i" :class="{ hot: i === 4 }">{{ c[0] }}</th></tr>
              </thead>
              <tbody>
                <tr v-for="(r, n) in feeRows" :key="n" :class="{ current: n === 0 }">
                  <td class="no">{{ n + 1 }}</td>
                  <td class="c">{{ r[0] }}</td>
                  <td>{{ r[1] }}</td>
                  <td><span v-for="(p, k) in pieces(r[2])" :key="k" :class="{ full: isMark(p) }">{{ p }}</span></td>
                  <td v-if="n === 0" class="edit">
                    <div class="pick"><select v-model="basis" aria-label="计算基数"><option>A1+A2+A3+A4</option></select><i class="drop"></i></div>
                  </td>
                  <td v-else>{{ r[3] }}</td>
                  <td class="y"><span v-for="(p, k) in pieces(r[4])" :key="k" :class="{ full: isMark(p) }">{{ p }}</span></td>
                  <td class="r">{{ r[5] }}</td>
                  <td class="y r">0</td>
                  <td class="y r">0</td>
                  <td>{{ r[6] }}</td>
                  <td></td>
                </tr>
              </tbody>
            </table>
          </div>
          <div class="scroll"><i class="up"></i><div class="thumb"></div><i class="down"></i></div>
          <div class="mark mark-b"></div>
          <a class="drag" href="#"><span class="cloud"><svg width="22" height="18" viewBox="0 0 22 18" fill="none" stroke="#fff" stroke-width="2.600"><circle cx="11" cy="5.500" r="3.800" /><circle cx="5.500" cy="12" r="3.800" /><path d="M8 9.500l5.500 5.500a4 4 0 1 0 0-6L8.500 14.500" /></svg></span><span class="drag-text">拖拽至此上传</span></a>
        </section>
      </main>
    </div>

    <footer class="status">
      <div class="status-in">
        <span class="seg first">工程量清单项目计量规范(2013-山东)</span>
        <span class="seg quota-name">山东省安装工程消耗量定额(2016)(一般计税【税金9%】)</span>
        <span class="seg">民用安装工程</span>
        <span class="seg">省20年-安装138(一般计税)</span>
        <div class="totals"><span v-for="t in totals" :key="t">{{ t }}</span></div>
        <button class="view" aria-label="视图"><svg width="14" height="14" viewBox="0 0 14 14"><rect x=".5" y=".5" width="13" height="13" rx="1" fill="#fff" stroke="#777" /><path d="M0 7h14" stroke="#3f97ff" stroke-width="5" /></svg></button>
        <i class="bar"></i>
        <button class="view" aria-label="上下布局"><svg width="14" height="14" viewBox="0 0 14 14"><rect x="1" y="0" width="12" height="7" rx="1" fill="#3f97ff" /><rect x="1" y="8" width="12" height="7" rx="1" fill="#3f97ff" /></svg></button>
        <button class="plain" aria-label="左右布局"><svg width="12" height="12" viewBox="0 0 12 12"><path d="M0 0h5v12H0zM7 0h5v12H7z" fill="#8c8c8c" /></svg></button>
        <span class="pct">100%</span>
        <button class="plain" aria-label="缩小"><svg width="12" height="12" viewBox="0 0 12 12"><path d="M0 6h12" stroke="#555" stroke-width="2" /></svg></button>
        <input v-model="zoom" class="range" type="range" min="0" max="100" aria-label="缩放" />
        <button class="plain" aria-label="放大"><svg width="12" height="12" viewBox="0 0 12 12"><path d="M0 6h12M6 0v12" stroke="#555" stroke-width="1.800" /></svg></button>
      </div>
    </footer>
  </div>
</template>

<style>
html,
body {
  margin: 0;
  overflow: hidden;
}
</style>

<style scoped>
.app {
  display: flex;
  flex-direction: column;
  height: 100vh;
  overflow: hidden;
  background: #f4f4f4;
  color: #1c1c1c;
  font: 12px/16px 'Noto Sans', 'Noto Sans CJK SC', sans-serif;
}
.app * {
  box-sizing: border-box;
}
button {
  padding: 0;
  border: 0;
  background: none;
  color: inherit;
  font: inherit;
  white-space: nowrap;
}
svg {
  display: block;
  flex: none;
  overflow: visible;
}
.tri {
  flex: none;
  width: 0;
  height: 0;
  border: 3px solid transparent;
  border-top-color: #555;
  border-bottom: 0;
}
.tri.dark {
  border-top-color: #000;
}

/* title and menus */
.top {
  flex: none;
  background: linear-gradient(#fff, #f2f2f2);
  border-bottom: 1px solid #d4d4d4;
}
.title-row {
  display: grid;
  grid-template-columns: 1fr auto 1fr;
  height: 28px;
}
.quick {
  display: flex;
  align-items: center;
  padding: 0 3px 4px;
}
.quick .save {
  margin-left: 18px;
}
.quick .undo {
  margin-left: 10px;
}
.quick .tri {
  margin-left: 6px;
}
.quick .redo,
.quick .cut,
.quick .copy,
.quick .paste {
  margin-left: 10px;
}
.quick .more {
  margin-left: 8px;
}
.title {
  padding-right: 8px;
  line-height: 28px;
}
.win {
  display: flex;
  justify-content: flex-end;
  align-items: center;
  gap: 28px;
  padding: 0 15px 4px;
}
.menu-row {
  display: flex;
  align-items: center;
  height: 20px;
}
.file {
  display: flex;
  align-items: center;
  width: 45px;
  height: 20px;
  padding-left: 4px;
}
.file .tri {
  margin-left: 1px;
}
.menu {
  height: 20px;
  padding: 0 13px;
}
.menu.on {
  background: #4096ff;
  color: #fff;
  border-radius: 3px 3px 0 0;
}
.search {
  display: flex;
  align-items: center;
  gap: 5px;
  width: 280px;
  height: 18px;
  margin-left: auto;
  padding: 0 3px;
  border: 1px solid #d8d8d8;
  border-radius: 3px;
  background: #fff;
}
.search input {
  flex: 1;
  min-width: 0;
  padding: 0;
  border: 0;
  outline: 0;
  background: none;
  font: inherit;
}
.search input::placeholder {
  color: #757575;
}
.login {
  height: 18px;
  margin: 0 8px 0 30px;
  padding: 0 8px;
  border-radius: 9px;
  background: #4096ff;
  color: #fff;
}
.mini.grid {
  margin: 0 4px 0 7px;
}
.mini.info {
  margin: 0 4px 0 7px;
}
.update {
  display: flex;
  align-items: center;
  margin-left: 8px;
}
.chev {
  margin: 0 7px 0 14px;
}

/* toolbar */
.tools {
  display: flex;
  flex: none;
  height: 73px;
  padding: 7px 0 0 8px;
  border-bottom: 1px solid #c9c9c9;
  background: linear-gradient(#f4f4f4, #dedede);
}
.tool {
  display: flex;
  flex: none;
  flex-direction: column;
  align-items: center;
}
.label {
  margin-top: 3px;
}
.second {
  display: flex;
  align-items: center;
}
.second.end {
  align-self: flex-end;
  gap: 11px;
}
.below {
  margin-top: 7px;
}
.off {
  color: #9b9b9b;
}
.g4 { margin-left: 4px; }
.g7 { margin-left: 7px; }
.g10 { margin-left: 10px; }
.g12 { margin-left: 12px; }
.g16 { margin-left: 16px; }
.g20 { margin-left: 20px; }
.g24 { margin-left: 24px; }
.g28 { margin-left: 28px; }

/* page tabs */
.pages {
  display: flex;
  flex: none;
  height: 27px;
  border-bottom: 1px solid #dcdcdc;
}
.page {
  padding: 2px 16px 0 15px;
  border-right: 1px solid #c0c0c0;
  color: #000;
}
.page:first-child {
  padding-left: 10px;
}
.page.on {
  background: #cce8ff;
  color: #4096ff;
}
.nav-icons {
  display: flex;
  align-items: center;
  gap: 12px;
  margin-left: auto;
  padding-right: 21px;
}
.nav-icons .gear {
  margin-left: 6px;
}
.nav-icons .tri {
  margin-left: -8px;
}

/* left panel */
.body {
  display: flex;
  flex: 1;
  min-height: 0;
}
.side {
  flex: none;
  width: 259px;
  border-right: 2px solid #e6e6e6;
}
.side-head {
  display: flex;
  justify-content: flex-end;
  padding: 7px 12px 7px 0;
}
.collapse {
  display: flex;
  align-items: center;
  justify-content: center;
  width: 15px;
  height: 15px;
  border: 1px solid #b0b0b0;
  border-radius: 2px;
  background: #e6e6e6;
}
.side-tabs {
  display: flex;
  height: 28px;
  margin-right: 2px;
  border: solid #dcdcdc;
  border-width: 1px 0;
  background: #fff;
}
.side-tabs button {
  padding: 2px 15px 0;
  border-right: 1px solid #c0c0c0;
  background: #f4f4f4;
  color: #000;
}
.side-tabs .on {
  padding-left: 10px;
  background: #cce8ff;
  color: #4096ff;
}
.tree {
  display: flex;
  align-items: center;
}
.tree a {
  color: #4096ff;
  text-decoration: none;
}

/* tables */
.main {
  display: flex;
  flex: 1;
  flex-direction: column;
  min-width: 0;
}
.upper {
  position: relative;
  flex: none;
  height: 209px;
  border-bottom: 2px solid #c0c0c0;
  background: #fff;
}
.grid-table {
  table-layout: fixed;
  width: 0;
  border-left: 1px solid #c0c0c0;
  border-collapse: separate;
  border-spacing: 0;
  font: 12px/14px 'Noto Sans CJK SC', sans-serif;
  font-feature-settings: 'hwid';
}
.grid-table th,
.grid-table td {
  overflow: hidden;
  border: solid #c0c0c0;
  border-width: 0 1px 1px 0;
  white-space: pre;
}
.grid-table th {
  height: 24px;
  padding: 0;
  background: #e8e8e8;
  font-weight: 400;
  text-align: center;
}
.grid-table td {
  height: 23px;
  padding: 1px 3px 3px 2px;
  background: #fff;
  text-align: left;
}
.grid-table th.hot {
  background: #ffe6c7;
  border-bottom: 2px solid #0066ff;
  font-weight: 700;
}
.grid-table .c {
  text-align: center;
}
.grid-table .r {
  text-align: right;
}
.grid-table td.no {
  padding: 2px 0;
  text-align: center;
}
.full {
  font-feature-settings: normal;
}
.list {
  border-top: 1px solid #c0c0c0;
}
.grid-table td.code {
  padding: 0;
}
.node {
  display: flex;
  align-items: center;
  gap: 2px;
}
.node span {
  padding-bottom: 2px;
}
.node .dots {
  margin-left: 6px;
}
.root td:not(.no) {
  background: #c3c3c3;
  font-weight: 700;
}
.item td:not(.no) {
  background: #dfeaff;
}
.quota td:not(.no) {
  border-bottom-color: #808080;
}
.picked td {
  color: #a935b5;
}
.picked td:not(.no) {
  border-bottom: 2px solid #808080;
  background: #b3d5ff;
  box-shadow: inset 0 1px #808080;
}
.picked td.code {
  border-right: 2px solid #808080;
  background: #fff;
}
.picked td:last-child {
  border-right: 2px solid #808080;
}
.picked td.no,
.current td.no {
  background: #ffe6c7;
}
.picked td.no {
  border-right: 2px solid #0066ff;
}
.box {
  display: block;
  appearance: none;
  width: 14px;
  height: 14px;
  margin: 1px auto 0;
  border: 1px solid #808080;
  border-radius: 2px;
  background: #fff;
}
.grid-table td.y {
  background: #ffffea;
}
.grid-table .current td:not(.no) {
  border-bottom-color: #0066ff;
  background: #b3d5ff;
  box-shadow: inset 0 2px #0066ff, inset 0 -1px #0066ff;
}
.grid-table .current td.y {
  background: #b2d5f1;
}
.current td.no {
  border-right: 2px solid #0066ff;
  font-weight: 700;
}
.current td:last-child {
  border-right: 2px solid #0066ff;
}
.grid-table .current td.edit {
  padding: 0;
  border-right: 2px solid #0066ff;
  background: #fff;
  box-shadow: inset 1px 2px #0066ff, inset 0 -1px #0066ff;
}
.pick {
  display: flex;
  align-items: center;
  padding: 0 5px 2px 2px;
}
.pick select {
  flex: 1;
  min-width: 0;
  padding: 0;
  border: 0;
  outline: 0;
  appearance: none;
  background: none;
  color: inherit;
  font: inherit;
  font-feature-settings: inherit;
}
.drop {
  border: 4px solid transparent;
  border-top: 5px solid #3a86c8;
  border-bottom: 0;
}

/* detail tabs */
.details {
  display: flex;
  flex: none;
  gap: 2px;
  height: 29px;
  padding: 5px 0 0 8px;
}
.details button {
  padding: 0 15px;
  border-radius: 2px 2px 0 0;
  background: #bfbfbf;
}
.details .on {
  background: #4096ff;
  color: #fff;
  font-weight: 700;
}
.lower {
  position: relative;
  display: flex;
  flex: 1;
  min-height: 0;
  border-top: 1px solid #c0c0c0;
  background: #fff;
}
.clip {
  flex: 1;
  min-width: 0;
  margin-bottom: 2px;
  overflow: hidden;
}
.scroll {
  display: flex;
  flex-direction: column;
  align-items: center;
  width: 14px;
  padding: 5px 0;
  background: #e8e8e8;
}
.up,
.down {
  border: 4px solid transparent;
  border-bottom-color: #777;
  border-top: 0;
}
.down {
  margin-top: auto;
  border-top: 4px solid #777;
  border-bottom: 0;
}
.thumb {
  width: 10px;
  height: 341px;
  margin-top: 5px;
  border-radius: 5px;
  background: #c0c0c0;
}

/* red annotation frames over the tables */
.mark {
  position: absolute;
  border: 3px solid #ff1f14;
  border-radius: 2px;
  pointer-events: none;
}
.mark-a {
  top: 86px;
  left: 782px;
  width: 464px;
  height: 56px;
}
.mark-b {
  top: 0;
  left: 116px;
  width: 721px;
  height: 68px;
}
.drag {
  position: absolute;
  top: 17px;
  right: 0;
  display: flex;
  align-items: center;
  width: 98px;
  height: 38px;
  overflow: hidden;
  border: solid #0a98ff;
  border-width: 1px 0;
  border-radius: 8px 0 0 8px;
  background: #eef7ff;
  color: #1a9bff;
  font-size: 13px;
  font-weight: 700;
  text-decoration: none;
  white-space: nowrap;
}
.cloud {
  display: flex;
  flex: none;
  align-items: center;
  justify-content: center;
  width: 37px;
  height: 38px;
  margin-right: 7px;
  border-radius: 8px;
  background: linear-gradient(45deg, #2bb1ff, #0a90ff);
}
.drag-text {
  flex: none;
}

/* status bar */
.status {
  flex: none;
  height: 22px;
  overflow: hidden;
  border-top: 1px solid #d4d4d4;
}
.status-in {
  display: flex;
  align-items: center;
  height: 30px;
  padding: 0 6px;
  white-space: nowrap;
}
.seg {
  margin-right: 16px;
  padding-right: 26px;
  border-right: 1px solid #a0a0a0;
}
.seg.first {
  margin-right: 24px;
  padding-right: 20px;
}
.seg.quota-name {
  padding-right: 34px;
}
.totals {
  display: flex;
  gap: 9px;
  margin-left: auto;
  margin-right: 17px;
}
.view {
  display: flex;
  align-items: center;
  justify-content: center;
  width: 22px;
  height: 22px;
  border: 1px solid #d0d0d0;
  border-radius: 3px;
  background: #fafafa;
}
.bar {
  width: 1px;
  height: 24px;
  margin: 0 9px;
  background: #a0a0a0;
}
.view + .plain {
  margin-left: 10px;
}
.pct {
  margin: 0 12px 0 19px;
}
.range {
  width: 106px;
  height: 12px;
  margin: 0 11px;
  appearance: none;
  background: linear-gradient(#c8c8c8, #c8c8c8) center / 100% 2px no-repeat;
}
.range::-webkit-slider-thumb {
  appearance: none;
  width: 12px;
  height: 12px;
  border: 1px solid #555;
  border-radius: 50%;
  background: #fff;
}
</style>
